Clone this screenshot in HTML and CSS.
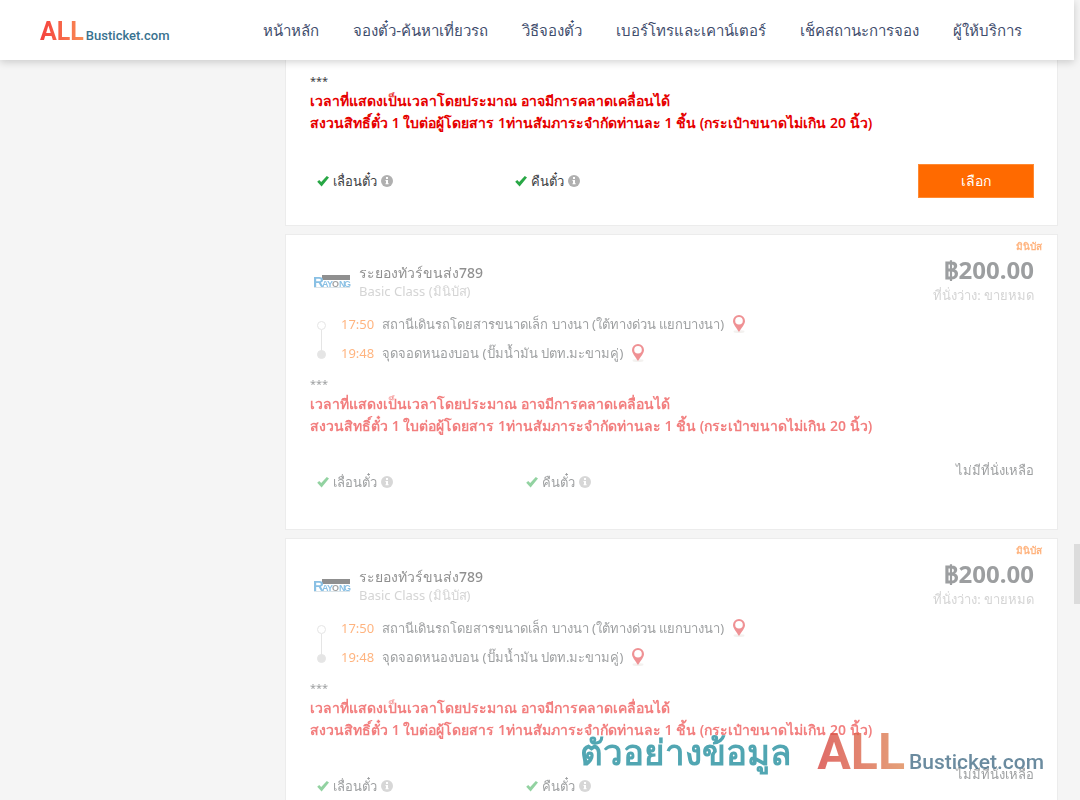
FILE: index.html
```html
<!DOCTYPE html>
<html lang="th">
<head>
<meta charset="utf-8">
<meta name="viewport" content="width=device-width, initial-scale=1">
<title>ALL Busticket.com</title>
<link rel="stylesheet" href="styles.css">
</head>
<body>
<svg class="sprite" aria-hidden="true">
  <symbol id="check" viewBox="0 0 12 12"><path d="M.2 6.800 2.200 5l2 2.100L9.800.9 12 2.500 4.600 11.400z"/></symbol>
  <symbol id="info" viewBox="0 0 12 12"><circle cx="6" cy="6" r="6"/><path fill="#fff" d="M5 2h2v2H5zM4.500 5H7v3.200h.7v1H4.500v-1H5V6h-.5z"/></symbol>
  <symbol id="pin" viewBox="0 0 14 20"><ellipse cx="7" cy="17.500" rx="5.500" ry="1.500" fill="#e8e4e0"/><path fill="#e0262b" fill-rule="evenodd" d="M7 1a6 6 0 0 1 6 6c0 3.500-3.500 6.500-6 11C4.500 13.500 1 10.500 1 7a6 6 0 0 1 6-6zm0 2a3.800 3.800 0 1 0 0 7.600A3.800 3.800 0 0 0 7 3z"/></symbol>
</svg>
<header class="header">
  <a class="brand" href="#"><span class="brand-all">ALL</span><span class="brand-name">Busticket.com</span></a>
  <nav class="nav">
    <a href="#">หน้าหลัก</a>
    <a href="#">จองตั๋ว-ค้นหาเที่ยวรถ</a>
    <a href="#">วิธีจองตั๋ว</a>
    <a href="#">เบอร์โทรและเคาน์เตอร์</a>
    <a href="#">เช็คสถานะการจอง</a>
    <a href="#">ผู้ให้บริการ</a>
  </nav>
</header>
<main class="results">
  <article class="card card-first">
    <div class="note">
      <p class="stars">***</p>
      <p class="warn">เวลาที่แสดงเป็นเวลาโดยประมาณ อาจมีการคลาดเคลื่อนได้</p>
      <p class="warn">สงวนสิทธิ์ตั๋ว 1 ใบต่อผู้โดยสาร 1ท่านสัมภาระจำกัดท่านละ 1 ชิ้น (กระเป๋าขนาดไม่เกิน 20 นิ้ว)</p>
    </div>
    <div class="foot">
      <div class="perks">
        <span class="perk"><svg class="check"><use href="#check"/></svg>เลื่อนตั๋ว<svg class="info"><use href="#info"/></svg></span>
        <span class="perk"><svg class="check"><use href="#check"/></svg>คืนตั๋ว<svg class="info"><use href="#info"/></svg></span>
      </div>
      <button class="select" type="button">เลือก</button>
    </div>
  </article>
  <article class="card sold-out">
    <div class="fade">
      <div class="tag">มินิบัส</div>
      <div class="top">
        <svg class="operator" viewBox="0 0 38 14"><path fill="#222" d="M9 1h28v5H9z"/><path fill="#b9cbd5" d="M1 13h36v1H1z"/><text class="op-text" x="0 9 14 19 26 31" y="13"><tspan class="op-r">R</tspan>AY<tspan class="op-o">O</tspan>NG</text></svg>
        <div class="who"><h2 class="name">ระยองทัวร์ขนส่ง789</h2><p class="class">Basic Class (มินิบัส)</p></div>
        <div class="cost"><p class="price">฿200.00</p><p class="seats">ที่นั่งว่าง: ขายหมด</p></div>
      </div>
      <ol class="route">
        <li class="stop"><span class="dot"></span><time class="time">17:50</time><span>สถานีเดินรถโดยสารขนาดเล็ก บางนา (ใต้ทางด่วน แยกบางนา)</span><svg class="pin"><use href="#pin"/></svg></li>
        <li class="stop"><span class="dot dot-end"></span><time class="time">19:48</time><span>จุดจอดหนองบอน (ปั๊มน้ำมัน ปตท.มะขามคู่)</span><svg class="pin"><use href="#pin"/></svg></li>
      </ol>
      <div class="note">
        <p class="stars">***</p>
        <p class="warn">เวลาที่แสดงเป็นเวลาโดยประมาณ อาจมีการคลาดเคลื่อนได้</p>
        <p class="warn">สงวนสิทธิ์ตั๋ว 1 ใบต่อผู้โดยสาร 1ท่านสัมภาระจำกัดท่านละ 1 ชิ้น (กระเป๋าขนาดไม่เกิน 20 นิ้ว)</p>
      </div>
      <div class="foot">
        <div class="perks">
          <span class="perk"><svg class="check"><use href="#check"/></svg>เลื่อนตั๋ว<svg class="info"><use href="#info"/></svg></span>
          <span class="perk"><svg class="check"><use href="#check"/></svg>คืนตั๋ว<svg class="info"><use href="#info"/></svg></span>
        </div>
        <span class="none">ไม่มีที่นั่งเหลือ</span>
      </div>
    </div>
  </article>
  <article class="card sold-out">
    <div class="fade">
      <div class="tag">มินิบัส</div>
      <div class="top">
        <svg class="operator" viewBox="0 0 38 14"><path fill="#222" d="M9 1h28v5H9z"/><path fill="#b9cbd5" d="M1 13h36v1H1z"/><text class="op-text" x="0 9 14 19 26 31" y="13"><tspan class="op-r">R</tspan>AY<tspan class="op-o">O</tspan>NG</text></svg>
        <div class="who"><h2 class="name">ระยองทัวร์ขนส่ง789</h2><p class="class">Basic Class (มินิบัส)</p></div>
        <div class="cost"><p class="price">฿200.00</p><p class="seats">ที่นั่งว่าง: ขายหมด</p></div>
      </div>
      <ol class="route">
        <li class="stop"><span class="dot"></span><time class="time">17:50</time><span>สถานีเดินรถโดยสารขนาดเล็ก บางนา (ใต้ทางด่วน แยกบางนา)</span><svg class="pin"><use href="#pin"/></svg></li>
        <li class="stop"><span class="dot dot-end"></span><time class="time">19:48</time><span>จุดจอดหนองบอน (ปั๊มน้ำมัน ปตท.มะขามคู่)</span><svg class="pin"><use href="#pin"/></svg></li>
      </ol>
      <div class="note">
        <p class="stars">***</p>
        <p class="warn">เวลาที่แสดงเป็นเวลาโดยประมาณ อาจมีการคลาดเคลื่อนได้</p>
        <p class="warn">สงวนสิทธิ์ตั๋ว 1 ใบต่อผู้โดยสาร 1ท่านสัมภาระจำกัดท่านละ 1 ชิ้น (กระเป๋าขนาดไม่เกิน 20 นิ้ว)</p>
      </div>
      <div class="foot">
        <div class="perks">
          <span class="perk"><svg class="check"><use href="#check"/></svg>เลื่อนตั๋ว<svg class="info"><use href="#info"/></svg></span>
          <span class="perk"><svg class="check"><use href="#check"/></svg>คืนตั๋ว<svg class="info"><use href="#info"/></svg></span>
        </div>
        <span class="none">ไม่มีที่นั่งเหลือ</span>
      </div>
    </div>
  </article>
</main>
<div class="thumb"></div>
<div class="watermark"><span class="sample">ตัวอย่างข้อมูล</span><span class="brand brand-large"><span class="brand-all">ALL</span><span class="brand-name">Busticket.com</span></span></div>
</body>
</html>
```
FILE: styles.css
```css
* { box-sizing: border-box; }
body {
  margin: 0;
  height: 100vh;
  overflow: hidden;
  background: #f5f5f5;
  color: #3c4043;
  font: 13px/22px "Noto Sans", "Open Sans", sans-serif;
}
p, h2, ol { margin: 0; padding: 0; }
a { color: inherit; text-decoration: none; }
svg { flex: none; }
.sprite { position: absolute; width: 0; height: 0; }

.header {
  position: relative;
  z-index: 2;
  display: flex;
  align-items: center;
  justify-content: space-between;
  height: 60px;
  margin-right: 6px;
  padding: 0 52px 0 40px;
  background: #fff;
  box-shadow: 0 2px 8px rgba(0, 0, 0, .18);
}
.brand { display: flex; align-items: baseline; gap: 2px; font-family: Roboto, sans-serif; font-weight: 700; }
.header .brand { padding-top: 4px; }
.brand-all {
  font-size: 25px;
  line-height: 32px;
  background: linear-gradient(90deg, #f5403d, #f98d55);
  background-clip: text;
  color: transparent;
}
.brand-name { font-size: 13px; color: #39728f; font-weight: 500; }
.nav { display: flex; gap: 34px; font-size: 15px; color: #3f4d6d; white-space: nowrap; }

.results { display: grid; gap: 8px; margin: 0 22px 0 285px; }
.card { padding: 0 23px 0 24px; background: #fff; border: 1px solid #ececec; }
.card-first { height: 166px; padding-top: 8px; border-top: 0; }
.sold-out { height: 296px; }
.fade { opacity: .5; }
.note { font-size: 14px; white-space: nowrap; }
.stars { padding-top: 3px; font-size: 11px; line-height: 19px; }
.warn { color: #e60000; font-weight: 600; }
.foot { display: flex; align-items: center; justify-content: space-between; margin-top: 30px; }
.perks { display: grid; grid-template-columns: 198px auto; padding-left: 7px; }
.sold-out .perks { grid-template-columns: 209px auto; }
.perk { display: flex; align-items: center; gap: 4px; }
.check { width: 12px; height: 12px; fill: #28a745; }
.info { width: 12px; height: 12px; fill: #b0b0b0; }
.select {
  width: 116px;
  height: 34px;
  border: 1px solid #ff8a33;
  background: #ff6a00;
  color: #fff;
  font: inherit;
  font-size: 14px;
  font-weight: 500;
}

.tag { margin-right: -8px; padding-top: 3px; text-align: right; font-size: 10px; line-height: 16px; font-weight: 600; color: #ff6a00; }
.top { display: flex; align-items: flex-start; }
.operator { width: 38px; height: 14px; margin: 20px 8px 0 3px; overflow: visible; }
.op-text { font: 700 9px "Liberation Sans", sans-serif; fill: #1683cb; }
.op-r { font-size: 15px; }
.op-o { fill: #444; }
.who { padding-top: 9px; }
.name { font-size: 14px; line-height: 20px; font-weight: 500; color: #222; }
.class { line-height: 17px; color: #aaa; }
.cost { margin-left: auto; text-align: right; }
.price { font-size: 24px; line-height: 32px; font-weight: 700; }
.seats { line-height: 18px; color: #aaa; }
.route { display: grid; margin-top: 5px; list-style: none; white-space: nowrap; }
.stop { display: flex; align-items: center; gap: 8px; height: 29px; }
.dot { position: relative; width: 9px; height: 9px; margin: 4px 7px 0 7px; border: 1px solid #ccc; border-radius: 50%; }
.dot::after { content: ""; position: absolute; left: 3px; top: 8px; width: 1px; height: 21px; background: #ccc; }
.dot-end { background: #ccc; }
.dot-end::after { content: none; }
.time { color: #ff6a00; }
.pin { width: 14px; height: 20px; }
.sold-out .note { padding-top: 4px; }
.sold-out .foot { margin-top: 22px; }
.none { padding-bottom: 24px; }

.thumb { position: fixed; right: 0; top: 68%; width: 6px; height: 60px; background: #dcdcdc; }
.watermark { position: fixed; right: 36px; bottom: 20px; display: flex; align-items: flex-start; gap: 26px; opacity: .8; }
.sample { font-size: 35px; line-height: 56px; font-weight: 700; color: #26909f; }
.brand-large { gap: 4px; }
.brand-large .brand-all { font-size: 50px; line-height: 56px; background-image: linear-gradient(90deg, #d84642, #df8a58); }
.brand-large .brand-name { font-size: 21px; font-weight: 500; color: #466f88; }
```
